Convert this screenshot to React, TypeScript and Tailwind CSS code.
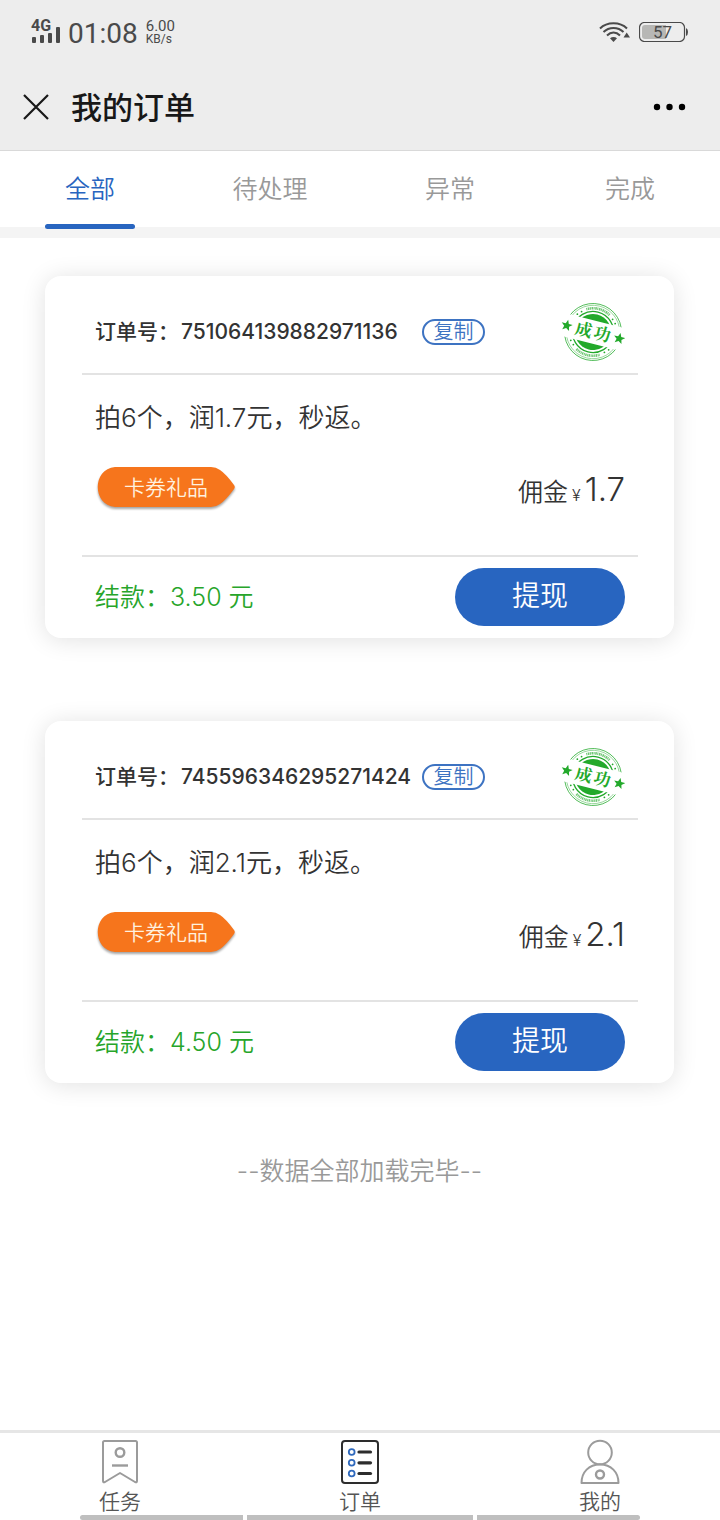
import { useState } from 'react'
import { clsx } from 'clsx'

interface Order {
  id: string
  desc: string
  tag: string
  commission: string
  settlement: string
}

const TABS = ['全部', '待处理', '异常', '完成']

const ORDERS: Order[] = [
  { id: '751064139882971136', desc: '拍6个，润1.7元，秒返。', tag: '卡券礼品', commission: '1.7', settlement: '3.50' },
  { id: '745596346295271424', desc: '拍6个，润2.1元，秒返。', tag: '卡券礼品', commission: '2.1', settlement: '4.50' },
]

const STAR = 'M0 -5.8L1.6 -1.9L5.6 -1.8L2.5 0.8L3.5 4.8L0 2.6L-3.5 4.8L-2.5 0.8L-5.6 -1.8L-1.6 -1.9Z'

function StatusBar() {
  return (
    <div className="flex h-16 items-center justify-between pl-[31px] pr-8 text-[#4a4a4a]">
      <div className="flex items-center">
        <svg className="overflow-visible" width="30" height="32" viewBox="0 0 30 32" fill="currentColor" aria-hidden="true">
          <text x="0" y="15" fontFamily="Roboto, sans-serif" fontWeight="700" fontSize="16">4G</text>
          <rect x="1" y="21" width="4" height="6" rx="1" />
          <rect x="9" y="19" width="4" height="8" rx="1" />
          <rect x="17" y="17" width="4" height="10" rx="1" />
          <rect x="25" y="11" width="4" height="16" rx="1" />
        </svg>
        <span className="ml-[7px] mt-1 font-['Roboto',sans-serif] text-[28px] leading-8">01:08</span>
        <span className="ml-2 mt-0.5 flex flex-col font-['Roboto',sans-serif] leading-[13px]">
          <span className="text-[15px]">6.00</span>
          <span className="text-[12px]">KB/s</span>
        </span>
      </div>
      <div className="flex items-center gap-2">
        <svg width="32" height="22" viewBox="0 0 32 22" fill="none" stroke="currentColor" strokeWidth="2" aria-hidden="true">
          <path d="M1 7.5C8 0.5 21 0.5 28 7.5" />
          <path d="M4.5 11C10 5.5 19 5.5 24.5 11" />
          <path d="M8 14.5C12 10.5 17 10.5 21 14.5" />
          <path d="M11 17.3C13 15.5 16 15.5 18 17.3L14.5 21Z" fill="currentColor" stroke="none" />
          <path d="M24.5 16.5L27.7 11.5L31 16.5Z" fill="currentColor" stroke="none" />
        </svg>
        <svg width="49" height="20" viewBox="0 0 49 20" aria-hidden="true">
          <rect x="0.5" y="0.5" width="45" height="19" rx="5" fill="none" stroke="currentColor" strokeWidth="1.2" />
          <path d="M6 3H27V17H6Q3 17 3 14V6Q3 3 6 3Z" fill="#b7b7b5" />
          <path d="M47 6Q49 7 49 10T47 14Z" fill="currentColor" />
          <text x="23.5" y="16" textAnchor="middle" fontFamily="Roboto, sans-serif" fontSize="17" fill="currentColor">57</text>
        </svg>
      </div>
    </div>
  )
}

function TitleBar() {
  return (
    <div className="flex h-[86px] items-center pl-[23px] pr-[33px] text-[#181818]">
      <button type="button" aria-label="关闭">
        <svg width="26" height="26" viewBox="0 0 26 26" fill="none" stroke="currentColor" strokeWidth="2.2">
          <path d="M1 1L25 25M25 1L1 25" />
        </svg>
      </button>
      <h1 className="ml-[22px] flex-1 pt-0.5 text-[31px] font-medium leading-10">我的订单</h1>
      <button type="button" aria-label="更多">
        <svg width="34" height="8" viewBox="0 0 34 8" fill="#000">
          <circle cx="4" cy="4" r="3.2" />
          <circle cx="16.5" cy="4" r="3.2" />
          <circle cx="29" cy="4" r="3.2" />
        </svg>
      </button>
    </div>
  )
}

function SuccessStamp() {
  return (
    <svg width="64" height="64" viewBox="-32 -32 64 64" role="img" aria-label="成功">
      <defs>
        <clipPath id="stamp-caps">
          <path d="M-32 -32H32V-11.5H-32ZM-32 11.5H32V32H-32Z" />
        </clipPath>
      </defs>
      <g transform="rotate(14)" fill="#23a92b" stroke="none">
        <g clipPath="url(#stamp-caps)">
          <circle r="28.5" fill="none" stroke="#23a92b" strokeWidth="0.9" opacity="0.8" />
          <circle r="26.7" fill="none" stroke="#23a92b" strokeWidth="0.6" opacity="0.7" />
          <circle r="20.5" fill="none" stroke="#23a92b" strokeWidth="1.3" />
          <circle r="18" />
        </g>
        {/* worn lettering between the two rings */}
        <path d="M-12 -20.5A23.7 23.7 0 0 1 12 -20.5" fill="none" stroke="#23a92b" strokeWidth="2.6" strokeDasharray="1 0.6 1.6 0.5" opacity="0.65" />
        <path d="M-12 20.5A23.7 23.7 0 0 0 12 20.5" fill="none" stroke="#23a92b" strokeWidth="2.6" strokeDasharray="1.4 0.6 1 0.5" opacity="0.65" />
        <circle cx="-16" cy="-17" r="0.9" />
        <circle cx="-19.5" cy="-13.5" r="0.9" />
        <circle cx="16" cy="-17" r="0.9" />
        <circle cx="19.5" cy="-13.5" r="0.9" />
        <circle cx="-16" cy="17" r="0.9" />
        <circle cx="-19.5" cy="13.5" r="0.9" />
        <circle cx="16" cy="17" r="0.9" />
        <circle cx="19.5" cy="13.5" r="0.9" />
        <path d={STAR} transform="translate(-27 0)" />
        <path d={STAR} transform="translate(27 0)" />
        <text x="-18 1" y="6" fontFamily="'Noto Serif CJK SC', 'Noto Sans CJK SC', serif" fontSize="17" fontWeight="700">成功</text>
      </g>
    </svg>
  )
}

function GiftTag({ label }: { label: string }) {
  return (
    <span className="relative flex h-11 w-[142px] items-center justify-center pt-0.5 text-[21px] font-[350] text-[#fff1df]">
      <svg className="absolute inset-0 drop-shadow-[0_2px_1px_rgba(0,0,0,0.35)]" width="142" height="44" viewBox="0 0 142 44" aria-hidden="true">
        <path d="M20 2H116Q121 2 125 5Q131 9 139 20Q140.500 22 139 24Q131 35 125 39Q121 42 116 42H20C-3 40 -3 4 20 2Z" fill="#f6751c" />
      </svg>
      <span className="relative">{label}</span>
    </span>
  )
}

function OrderCard({ order }: { order: Order }) {
  return (
    <article className="rounded-2xl bg-white pl-[37px] pr-9 text-[#333] shadow-[0_2px_24px_rgba(0,0,0,0.12)]">
      <header className="flex h-[97px] items-center pl-[13px] pr-[13px] pt-3.5">
        <h2 className="w-[315px] whitespace-nowrap text-[21px] font-medium leading-8">
          订单号：<span className="ml-0.5">{order.id}</span>
        </h2>
        <button type="button" className="ml-3 h-[26px] w-[63px] rounded-full border-2 border-[#3d73c2] text-[20px] font-[350] leading-[22px] text-[#3d73c2]">
          复制
        </button>
        <span className="ml-auto">
          <SuccessStamp />
        </span>
      </header>
      <div className="border-y-2 border-[#e3e3e3] pb-[46px] pl-[13px] pr-[13px] pt-6 font-[350]">
        <p className="text-[26px] leading-[38px]">{order.desc}</p>
        <div className="mt-7 flex h-11 items-center justify-between">
          <GiftTag label={order.tag} />
          <p className="flex items-baseline pt-1.5 text-[25px] leading-10">
            佣金<span className="ml-1 text-base">¥</span>
            <span className="ml-1 text-[33px] font-light">{order.commission}</span>
          </p>
        </div>
      </div>
      <footer className="flex h-[81px] items-center justify-between pb-0.5 pl-[13px] pr-[13px]">
        <p className="text-[25px] font-[350] leading-[38px] text-[#27a52a]">结款：{order.settlement} 元</p>
        <button type="button" className="h-[58px] w-[170px] rounded-full bg-[#2865c0] pb-0.5 text-[28px] font-[350] leading-10 text-white">
          提现
        </button>
      </footer>
    </article>
  )
}

function TaskIcon() {
  return (
    <svg width="40" height="46" viewBox="0 0 40 46" fill="none" stroke="#9b9b9b" strokeWidth="2" strokeLinejoin="round" aria-hidden="true">
      <path d="M4.5 2H35.5Q37 2 37 3.5V42Q37 44 35 43L20 34L5 43Q3 44 3 42V3.5Q3 2 4.5 2Z" />
      <circle cx="20" cy="13.5" r="4.3" strokeWidth="2.4" />
      <path d="M12 26.5H28" strokeWidth="2.4" />
    </svg>
  )
}

function OrdersIcon() {
  return (
    <svg width="40" height="46" viewBox="0 0 40 46" fill="none" aria-hidden="true">
      <rect x="2" y="2" width="36" height="42" rx="3" stroke="#2d2d2d" strokeWidth="2" />
      {[13, 23.8, 34.5].map((y) => (
        <g key={y}>
          <circle cx="11.7" cy={y} r="2.9" stroke="#2f69bd" strokeWidth="1.8" />
          <path d={`M19 ${y}H30.5`} stroke="#2d2d2d" strokeWidth="3.2" strokeLinecap="round" />
        </g>
      ))}
    </svg>
  )
}

function MineIcon() {
  return (
    <svg width="40" height="46" viewBox="0 0 40 46" fill="none" stroke="#9b9b9b" strokeWidth="2" strokeLinejoin="round" aria-hidden="true">
      <circle cx="20" cy="13.5" r="11.8" />
      <path d="M1.5 44C1.5 33 9 25.5 20 25.5S38.5 33 38.5 44Z" />
      <circle cx="20" cy="35.5" r="4" strokeWidth="2.4" />
    </svg>
  )
}

const NAV = [
  { label: '任务', Icon: TaskIcon },
  { label: '订单', Icon: OrdersIcon },
  { label: '我的', Icon: MineIcon },
]

export default function App() {
  const [activeTab, setActiveTab] = useState(0)

  return (
    <div className="flex min-h-screen flex-col bg-white font-['Inter','Noto_Sans_CJK_SC',sans-serif]">
      <header className="border-b border-[#d9d9d9] bg-[#ededed]">
        <StatusBar />
        <TitleBar />
      </header>

      <div className="h-[87px] border-b-[11px] border-[#f4f4f4]">
        <div className="grid grid-cols-4" role="tablist">
          {TABS.map((tab, i) => (
            <button
              key={tab}
              type="button"
              role="tab"
              aria-selected={i === activeTab}
              onClick={() => setActiveTab(i)}
              className={clsx(
                'flex h-[78px] flex-col items-center justify-between pt-[18px] text-[25px] font-[350] leading-10',
                i === activeTab ? 'text-[#2865c0]' : 'text-[#999]'
              )}
            >
              {tab}
              <span className={clsx('h-[5px] w-1/2 rounded-sm', i === activeTab && 'bg-[#2865c0]')} />
            </button>
          ))}
        </div>
      </div>

      <main className="flex-1 pl-[45px] pr-[46px] pt-[38px]">
        <div className="flex flex-col gap-[83px]">
          {ORDERS.map((order) => (
            <OrderCard key={order.id} order={order} />
          ))}
        </div>
        <p className="mt-[69px] text-center text-[25px] font-[350] leading-[38px] text-[#999]">--数据全部加载完毕--</p>
      </main>

      <nav className="border-t-[3px] border-[#e6e6e6]">
        <div className="grid grid-cols-3">
          {NAV.map(({ label, Icon }) => (
            <a key={label} href="#" className="flex flex-col items-center pt-1.5 text-[21px] font-[350] leading-[26px] text-[#555]">
              <Icon />
              <span className="pt-1">{label}</span>
            </a>
          ))}
        </div>
        <div className="flex h-[5px] gap-1 px-20">
          <span className="flex-[163] rounded-l-full bg-[#bfbfbf]" />
          <span className="flex-[226] bg-[#bfbfbf]" />
          <span className="flex-[163] rounded-r-full bg-[#bfbfbf]" />
        </div>
      </nav>
    </div>
  )
}
